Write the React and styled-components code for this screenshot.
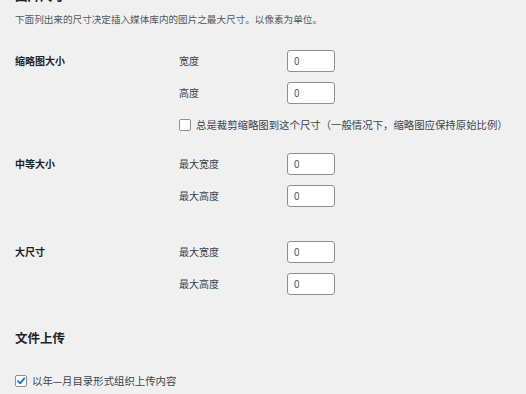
import React from "react";
import styled, { createGlobalStyle } from "styled-components";

const Global = createGlobalStyle`
  html, body { margin: 0; padding: 0; background: #f0f0f1; }
  body {
    width: 526px; height: 394px; overflow: hidden;
    font-family: "Noto Sans CJK SC", "Noto Sans", sans-serif;
    color: #1d2327;
  }
`;

const Page = styled.div`
  padding: 0 15px;
`;

const Heading = styled.h2`
  margin: ${(p) => p.$mt}px 0 0;
  font-size: 12.5px;
  line-height: 16px;
  font-weight: 700;
  color: #1d2327;
`;

const Desc = styled.p`
  margin: 8px 0 0;
  font-size: 9.6px;
  line-height: 14px;
  color: #50575e;
`;

const Section = styled.div`
  display: grid;
  grid-template-columns: 164px 1fr;
  margin-top: ${(p) => p.$mt}px;
`;

const SectionLabel = styled.div`
  font-size: 10px;
  line-height: 22px;
  font-weight: 700;
  color: #1d2327;
`;

const Fields = styled.div`
  display: flex;
  flex-direction: column;
  gap: 10px;
`;

const FieldRow = styled.div`
  display: grid;
  grid-template-columns: 108px 48px;
  align-items: center;
`;

const FieldLabel = styled.label`
  font-size: 10px;
  line-height: 22px;
  color: #3c434a;
`;

const NumInput = styled.div`
  box-sizing: border-box;
  width: 48px;
  height: 22px;
  background: #fff;
  border: 1px solid #8c8f94;
  border-radius: 3px;
  padding-left: 6px;
  font-size: 10px;
  line-height: 20px;
  color: #50575e;
`;

const CheckRow = styled.div`
  display: flex;
  align-items: center;
  gap: 5px;
  margin-top: ${(p) => p.$mt || 0}px;
  font-size: 10.4px;
  line-height: 14px;
  color: #3c434a;
`;

const Box = styled.span`
  box-sizing: border-box;
  width: 12px;
  height: 12px;
  flex: none;
  background: #fff;
  border: 1px solid #8c8f94;
  border-radius: 2px;
  display: flex;
  align-items: center;
  justify-content: center;
`;

const Check = ({ checked }) => (
  <Box>
    {checked && (
      <svg width="10" height="10" viewBox="0 0 10 10">
        <path d="M2 5.2 L4.2 7.4 L8.3 2.4" fill="none" stroke="#2271b1" strokeWidth="1.8" strokeLinecap="round" strokeLinejoin="round" />
      </svg>
    )}
  </Box>
);

const Field = ({ label }) => (
  <FieldRow>
    <FieldLabel>{label}</FieldLabel>
    <NumInput>0</NumInput>
  </FieldRow>
);

export default function App() {
  return (
    <>
      <Global />
      <Page>
        <Heading $mt={-12}>图片尺寸</Heading>
        <Desc>下面列出来的尺寸决定插入媒体库内的图片之最大尺寸。以像素为单位。</Desc>

        <Section $mt={24}>
          <SectionLabel>缩略图大小</SectionLabel>
          <Fields>
            <Field label="宽度" />
            <Field label="高度" />
            <CheckRow $mt={4}>
              <Check />
              总是裁剪缩略图到这个尺寸（一般情况下，缩略图应保持原始比例）
            </CheckRow>
          </Fields>
        </Section>

        <Section $mt={21}>
          <SectionLabel>中等大小</SectionLabel>
          <Fields>
            <Field label="最大宽度" />
            <Field label="最大高度" />
          </Fields>
        </Section>

        <Section $mt={34}>
          <SectionLabel>大尺寸</SectionLabel>
          <Fields>
            <Field label="最大宽度" />
            <Field label="最大高度" />
          </Fields>
        </Section>

        <Heading $mt={35}>文件上传</Heading>
        <CheckRow $mt={28}>
          <Check checked />
          以年—月目录形式组织上传内容
        </CheckRow>
      </Page>
    </>
  );
}
